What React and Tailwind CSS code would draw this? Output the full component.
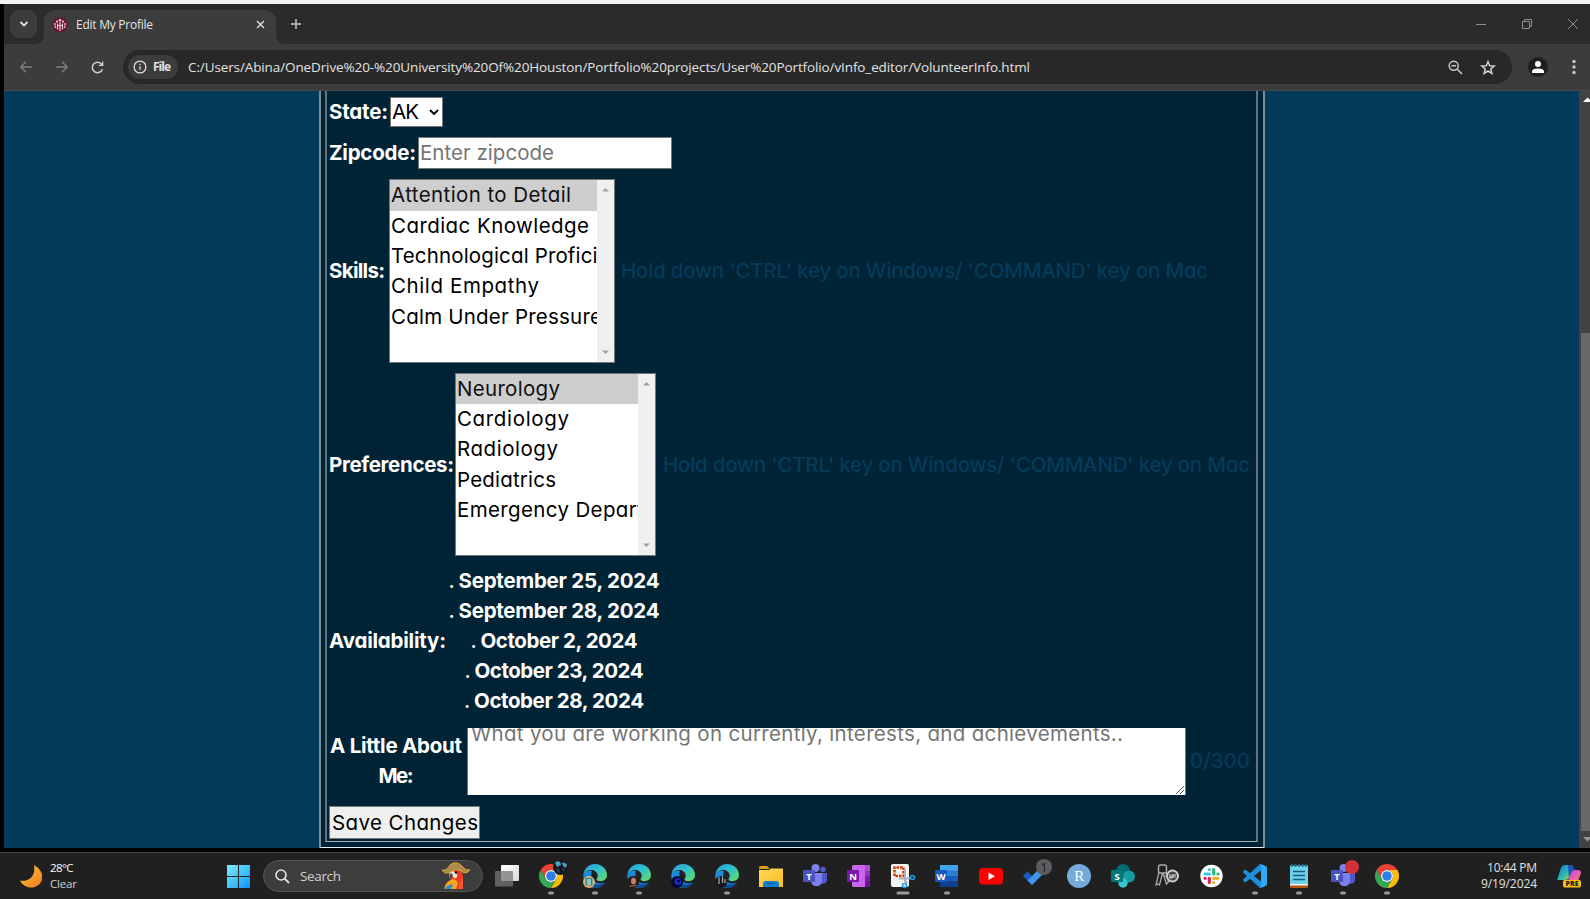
import React, { useLayoutEffect, useRef, useState } from 'react';

const FORM = "font-['Inter','Liberation_Sans',sans-serif] [font-feature-settings:'cv11'] text-[20.5px] leading-[30px]";
const UI = "font-['Open_Sans','Noto_Sans',sans-serif]";

/* Single line of text whose tracking is adjusted to fill a given width. */
function Fit({ w, className = '', children }) {
  const ref = useRef(null);
  const [tracking, setTracking] = useState(0);
  useLayoutEffect(() => {
    const natural = ref.current.getBoundingClientRect().width;
    setTracking((w - natural) / (String(children).length - 1));
  }, []);
  return (
    <span
      ref={ref}
      className={`inline-block shrink-0 whitespace-pre ${className}`}
      style={{ letterSpacing: `${tracking}px`, marginRight: `${-tracking}px` }}
    >
      {children}
    </span>
  );
}

const Label = ({ w, children }) => (
  <Fit w={w} className="font-bold text-white">{children}</Fit>
);

function ListBox({ width, first, options }) {
  return (
    <div className={`${width} flex shrink-0 border border-[#767676] bg-white`}>
      <div className="flex min-w-0 flex-1 flex-col overflow-hidden text-black">
        {options.map(([text, w], i) => (
          <div key={text} className={i === 0 ? `${first} shrink-0 overflow-hidden bg-[#cecece] pl-px text-[#101010]` : 'h-[30.2px] shrink-0 pl-px'}>
            <Fit w={w}>{text}</Fit>
          </div>
        ))}
      </div>
      <div className="flex w-[17px] shrink-0 flex-col items-center justify-between bg-[#f0f0f0] py-2">
        <svg width="7" height="4"><path d="M0 3.5L3.5 0L7 3.5Z" fill="#a3a3a3" /></svg>
        <svg width="7" height="4"><path d="M0 .5L3.5 4L7 .5Z" fill="#a3a3a3" /></svg>
      </div>
    </div>
  );
}

const skills = [['Attention to Detail', 180], ['Cardiac Knowledge', 198], ['Technological Proficiency', 254], ['Child Empathy', 148], ['Calm Under Pressure', 211]];
const prefs = [['Neurology', 103], ['Cardiology', 112], ['Radiology', 101], ['Pediatrics', 99], ['Emergency Department', 237]];
const dates = [['September 25, 2024', 201], ['September 28, 2024', 201], ['October 2, 2024', 157], ['October 23, 2024', 169], ['October 28, 2024', 170]];
const HINT = "Hold down 'CTRL' key on Windows/ 'COMMAND' key on Mac";

function Chrome() {
  return (
    <g transform="scale(.5)">
      <path fill="#ea4335" d="M3.2 12A24 24 0 0 1 44.8 12H24A12 12 0 0 0 13.6 30Z" />
      <path fill="#fbbc04" d="M44.8 12A24 24 0 0 1 24 48L34.4 30A12 12 0 0 0 24 12Z" />
      <path fill="#34a853" d="M24 48A24 24 0 0 1 3.2 12L13.6 30A12 12 0 0 0 34.4 30Z" />
      <circle cx="24" cy="24" r="12" fill="#fff" />
      <circle cx="24" cy="24" r="9.6" fill="#2f7de9" />
    </g>
  );
}

function Edge({ children }) {
  return (
    <g>
      <path fill="url(#edgeBlue)" d="M.3 11C2 8 5 6 9 7C8 9 8 13 10 16C13 19.500 18 20 22 18.500C20 22 16.500 24 12 24C5 24 0 18.500.3 11Z" />
      <path fill="#114a8b" d="M9.500 10C7.500 13 8 18 12 20.500C15 22 19 20.500 22 18.500C20 22 16.500 24 12.500 24C7 23 4 17 9.500 10Z" />
      <path fill="url(#edgeGreen)" d="M.3 11C1.200 4.500 6 0 12 0C19 0 24 5 24 11C24 15 21 17.200 17.500 17.200C15 17.200 13.500 16.300 13.500 15.200C13.500 14.300 15 13.500 14.700 11.300C14.300 8 11.500 6 8 6C4.500 6 1.800 8 .3 11Z" />
      {children}
    </g>
  );
}

const Badge = ({ letter, color }) => (
  <g>
    <rect x="0" y="6" width="12" height="12" rx="1" fill={color} />
    <text x="6" y="15.500" textAnchor="middle" fontSize="9.500" fontWeight="700" fill="#fff" fontFamily="Open Sans">{letter}</text>
  </g>
);

const Teams = ({ alert }) => (
  <g>
    <circle cx="12.500" cy="4" r="4" fill="#7b83eb" />
    <circle cx="20" cy="5.500" r="2.700" fill="#5059c9" />
    <path d="M17 9H24V16C24 19 21 20.500 18 19.500Z" fill="#5059c9" />
    <path d="M8 9H19V16C19 20 17 22 13.500 22C10 22 8 20 8 16Z" fill="#7b83eb" />
    <Badge letter="T" color="#4b53bc" />
    {alert && <circle cx="21" cy="3" r="7" fill="#d13438" />}
  </g>
);

const apps = [
  { art: <g><rect x="6" y="1" width="18" height="16" rx="1" fill="url(#paper)" /><rect x="0" y="7" width="18" height="15.500" rx="1" fill="#777" fillOpacity=".75" /></g> },
  { run: 1, art: <g><Chrome /><circle cx="21.500" cy="3.500" r="7.500" fill="#15191f" /><path d="M16-1C18-4 22-3 22 1L18 3ZM23-2L28 0L27 4L24 2Z" fill="#4f9fc4" /><path d="M17 5L20 4L21 9L18 8ZM23 5L26 4L25 9Z" fill="#28384d" /></g> },
  { run: 1, art: <Edge><circle cx="6" cy="18" r="6" fill="#e9ad77" /><path d="M2.500 14H9.500V21.500H2.500Z" fill="#238c86" /><path d="M4 16H8M4 18H8M4 20H8" stroke="#fff" /></Edge> },
  { run: 1, art: <Edge><circle cx="6" cy="18" r="6" fill="#2b1b17" /><ellipse cx="6.500" cy="17" rx="2.500" ry="3.200" fill="#b98263" /><path d="M2 23C4 20 9 20 10.500 22Z" fill="#7d5646" /></Edge> },
  { art: <Edge><circle cx="6" cy="18" r="6" fill="#080a34" /><circle cx="7" cy="17.500" r="3.200" fill="#1d2fd0" /><circle cx="7.500" cy="17" r="1.500" fill="#06071f" /></Edge> },
  { run: 1, art: <Edge><circle cx="6" cy="18" r="6" fill="#171a1c" /><path d="M4 13V20M7.500 12.500V19M10 15V19" stroke="#a9aeb0" strokeWidth="1.200" /></Edge> },
  { art: <g><path d="M0 3.500Q0 2 1.500 2H8L11 5H0Z" fill="#dc9a07" /><path d="M0 6H10L12 4.500H24V23H0Z" fill="url(#folder)" /><path d="M4 23V19.500Q4 17 6.500 17H17.500Q20 17 20 19.500V23Z" fill="#1082d4" /><path d="M8 19.500H16" stroke="#075797" strokeWidth="1.300" /></g> },
  { art: <Teams /> },
  { art: <g><rect x="5" y="1" width="18" height="22" rx="1.500" fill="#ca64ea" /><path d="M18 1H23V8H18Z" fill="#ae4bd5" /><path d="M18 7H23V12H18Z" fill="#9332bf" /><path d="M18 12H23V17H18Z" fill="#7719aa" /><path d="M18 17H23V23H18Z" fill="#6a1899" /><Badge letter="N" color="#7719aa" /></g> },
  { run: 2, art: <g><rect x="0" y="0" width="18" height="23" rx="2" fill="#f3f3f3" /><path d="M3.500 12V3.500H12.500V12Z" fill="none" stroke="#d83b01" strokeWidth="2.500" strokeDasharray="2.500 1" /><path d="M14 5V17L16.500 19M8 14.500H19" stroke="#aab1b8" strokeWidth="2" fill="none" /><circle cx="13.500" cy="21.500" r="2" fill="none" stroke="#1e9be8" strokeWidth="1.600" /><circle cx="21.500" cy="13.500" r="2" fill="none" stroke="#1e9be8" strokeWidth="1.600" /></g> },
  { run: 1, art: <g><path d="M5 1H23V7H5Z" fill="#41a5ee" /><path d="M5 6.500H23V12H5Z" fill="#2b7cd3" /><path d="M5 12H23V17.500H5Z" fill="#185abd" /><path d="M5 17.500H23V23H5Z" fill="#103f91" /><Badge letter="W" color="#185abd" /></g> },
  { art: <g><rect x="0" y="4" width="24" height="16.500" rx="4" fill="#f00" /><path d="M9.500 8.500L16 12.200L9.500 16Z" fill="#fff" /></g> },
  { art: <g><path d="M0 12L4.500 7.500L13.500 16.500L9 21Z" fill="#185abd" /><path d="M9 21L4.500 16.500L16 5L20.500 9.500Z" fill="#3f95ea" /><circle cx="21" cy="3" r="8" fill="#5c5c5c" /><text x="21" y="7.500" textAnchor="middle" fontSize="12" fill="#181818" fontFamily="Open Sans">1</text></g> },
  { art: <g><circle cx="12" cy="12" r="12" fill="#75aadb" /><text x="12.200" y="17" textAnchor="middle" fontSize="15" fill="#fff" fontFamily="Liberation Serif">R</text></g> },
  { art: <g><circle cx="12" cy="7" r="7" fill="#036c70" /><circle cx="18" cy="12.500" r="6" fill="#1a9ba1" /><circle cx="12" cy="19" r="4.700" fill="#37c6d0" /><Badge letter="S" color="#03787c" /></g> },
  { art: <g fill="none" stroke="#aaa"><rect x="3.500" y="1" width="8" height="8" rx="2" strokeWidth="1.500" /><path d="M4 8L1 21L3 20L4.500 21L7.500 9M8 9L11.500 20L13.500 18L11 9" strokeWidth="1.300" /><circle cx="17.500" cy="12" r="5.500" fill="#444" strokeWidth="2" stroke="#d0d0d0" /><path d="M15 10V14H17V11M18 10V14M20 10V13.500" stroke="#eee" /><path d="M9 12H12" /></g> },
  { art: <g><circle cx="12.500" cy="12" r="11.200" fill="#fff" /><g transform="translate(4 3.500)" strokeWidth="3.200" strokeLinecap="round"><path d="M6.300 2V2.100M2 6.500H6.300" stroke="#36c5f0" /><path d="M10.700 2V6.500M15 6.500H15.100" stroke="#2eb67d" /><path d="M10.700 10.800H15M10.700 15V15.100" stroke="#ecb22e" /><path d="M6.300 10.800V15M2 10.800H2.100" stroke="#e01e5a" /></g></g> },
  { run: 1, art: <g><path fill="#1f8fdc" d="M23.150 2.587L18.210.210a1.494 1.494 0 0 0-1.705.290l-9.460 8.630-4.120-3.128a.999.999 0 0 0-1.276.057L.327 7.261A1 1 0 0 0 .326 8.740L3.899 12 .326 15.260a1 1 0 0 0 .001 1.479L1.650 17.940a.999.999 0 0 0 1.276.057l4.120-3.128 9.460 8.630a1.492 1.492 0 0 0 1.704.290l4.942-2.377A1.500 1.500 0 0 0 24 20.060V3.939a1.500 1.500 0 0 0-.850-1.352zm-5.146 14.861L10.826 12l7.178-5.448v10.896z" /><path d="M18 .2L23.200 2.600Q24 3 24 4V20Q24 21 23.200 21.400L18 23.800Z" fill="#2ca9f5" /></g> },
  { run: 1, art: <g><rect x="3" y="1.500" width="18" height="20" fill="#6fd0ea" /><path d="M3 20.500H21V22.500Q21 24 19.500 24H4.500Q3 24 3 22.500Z" fill="#b5560d" /><path d="M3 20H21V21.500H3Z" fill="#f4f4f4" /><path d="M5 0V3M8.500 0V3M12 0V3M15.500 0V3M19 0V3" stroke="#1b6f90" strokeWidth="1.500" /><path d="M6 7.500H18M6 11.500H18M6 15.500H18" stroke="#135e7c" strokeWidth="1.500" /></g> },
  { run: 1, art: <Teams alert /> },
  { run: 1, art: <Chrome /> },
];

function TitleBar() {
  return (
    <div className={`flex h-10 items-end justify-between bg-[#2b2b2b] ${UI}`}>
      <div className="flex h-full items-end">
        <div className="mb-[6px] ml-[6px] flex h-7 w-[27px] items-center justify-center rounded-[9px] bg-[#3c3c3c]">
          <svg width="10" height="8"><path d="M1.500 2L5 5.500L8.500 2" fill="none" stroke="#e3e3e3" strokeWidth="1.800" /></svg>
        </div>
        <svg width="7" height="10" className="shrink-0"><path d="M7 0Q7 10-3 10H7Z" fill="#3c3c3c" /></svg>
        <div className="flex h-[34px] w-[232px] items-center rounded-t-[10px] bg-[#3c3c3c] pb-[5px] pl-[8px]">
          <svg width="16" height="16">
            <circle cx="8" cy="8" r="7.500" fill="#6d1230" />
            <g fill="#e5cdd5">
              <circle cx="8" cy="3.200" r="1.300" />
              <circle cx="5" cy="4.600" r="1.100" />
              <circle cx="11" cy="4.600" r="1.100" />
              <circle cx="2.800" cy="7" r="1" />
              <circle cx="13.200" cy="7" r="1" />
            </g>
            <path d="M8 5V14M5.500 6.500V12.500M10.500 6.500V12.500M3.200 8.500V11M12.800 8.500V11M5.500 8.500H10.500" stroke="#e5cdd5" strokeWidth="1.200" />
          </svg>
          <span className="ml-2 flex-1 text-[12px] leading-4 text-[#e3e3e3]"><Fit w={77}>Edit My Profile</Fit></span>
          <svg width="9" height="9" className="mr-[11px]"><path d="M1 1L8 8M8 1L1 8" stroke="#e3e3e3" strokeWidth="1.400" /></svg>
        </div>
        <svg width="10" height="10"><path d="M0 0Q0 10 10 10H0Z" fill="#3c3c3c" /></svg>
        <svg width="10" height="10" className="mb-[15px] ml-[5px]"><path d="M5 0V10M0 5H10" stroke="#c7c7c7" strokeWidth="1.500" /></svg>
      </div>
      <div className="mb-[15px] mr-3 flex items-center gap-9">
        <svg width="10" height="10"><path d="M0 5.500H10" stroke="#8f8f8f" /></svg>
        <svg width="10" height="10"><path d="M.5 2.500H7.500V9.500H.5ZM2.500 2.500V.5H9.500V7.500H7.500" fill="none" stroke="#8f8f8f" /></svg>
        <svg width="10" height="10"><path d="M0 0L10 10M10 0L0 10" stroke="#8f8f8f" /></svg>
      </div>
    </div>
  );
}

function AddressBar() {
  return (
    <div className={`flex h-[47px] items-start border-b border-[#4a4a4a] bg-[#3c3c3c] ${UI}`}>
      <div className="flex h-[46px] w-[119px] shrink-0 items-center pl-4">
        <svg width="12" height="12"><path d="M12 6H1M6 .7L.8 6L6 11.300" fill="none" stroke="#7d7d7d" strokeWidth="1.500" /></svg>
        <svg width="12" height="12" className="ml-6"><path d="M0 6H11M6 .7L11.200 6L6 11.300" fill="none" stroke="#7d7d7d" strokeWidth="1.500" /></svg>
        <svg width="13" height="13" className="ml-[23px]"><path d="M11.400 8.200A5.200 5.200 0 1 1 10.300 2.900L11.500 4.300" fill="none" stroke="#d0d0d0" strokeWidth="1.500" /><path d="M12.300.5V5H7.800V3.700H11V.5Z" fill="#d0d0d0" /></svg>
      </div>
      <div className="mt-[6px] flex h-[34px] w-[1389px] shrink-0 items-center rounded-full bg-[#282828] pl-[5px]">
        <div className="flex h-6 w-[50px] shrink-0 items-center rounded-full bg-[#3c3c3c] pl-[5px]">
          <svg width="14" height="14"><circle cx="7" cy="7" r="5.900" fill="none" stroke="#dcdcdc" strokeWidth="1.300" /><path d="M7 6.200V10M7 3.800V5.100" stroke="#dcdcdc" strokeWidth="1.300" /></svg>
          <Fit w={18} className="ml-[6px] text-[12px] font-bold leading-6 text-[#e3e3e3]">File</Fit>
        </div>
        <Fit w={842} className="ml-[10px] text-[13.5px] leading-6 text-[#e3e3e3]">C:/Users/Abina/OneDrive%20-%20University%20Of%20Houston/Portfolio%20projects/User%20Portfolio/vInfo_editor/VolunteerInfo.html</Fit>
        <div className="ml-auto mr-4 flex items-center gap-[17px]">
          <svg width="15" height="15"><circle cx="5.700" cy="5.700" r="4.500" fill="none" stroke="#c7c7c7" strokeWidth="1.500" /><path d="M9 9L14 14M3.500 5.700H8" stroke="#c7c7c7" strokeWidth="1.600" /></svg>
          <svg width="16" height="15"><path d="M8 1.700L9.700 5.800L14.200 6.100L10.800 9L11.900 13.400L8 11L4.100 13.400L5.200 9L1.800 6.100L6.300 5.800Z" fill="none" stroke="#d2d2d2" strokeWidth="1.500" /></svg>
        </div>
      </div>
      <div className="flex h-[46px] items-center">
        <svg width="20" height="20" className="ml-4"><circle cx="10" cy="10" r="10" fill="#1f1f1f" /><circle cx="10" cy="7" r="3" fill="#fff" /><path d="M4 16V14.500Q4 11.500 10 11.500T16 14.500V16Z" fill="#fff" /></svg>
        <svg width="4" height="16" className="ml-6"><g fill="#c7c7c7"><circle cx="2" cy="2.500" r="1.700" /><circle cx="2" cy="8" r="1.700" /><circle cx="2" cy="13.500" r="1.700" /></g></svg>
      </div>
    </div>
  );
}

function ProfileForm() {
  return (
    <div className="w-[946px] shrink-0 border-x-2 border-b border-x-[#7b8b95] border-b-[#e6eaec] bg-[#012336] pb-[5px] pl-1 pr-[5px]">
      <div className={`flex h-[751px] flex-col border-x-2 border-b border-x-[#65747e] border-b-[#a5b0b7] pl-[2px] ${FORM}`}>
        <div className="mt-[6px] flex h-[30px] shrink-0 items-center">
          <Label w={59}>State:</Label>
          <div className="ml-[2px] flex h-[30px] w-[53px] items-center border border-[#767676] bg-white pl-px text-black">
            <Fit w={27}>AK</Fit>
            <svg width="10" height="7" className="ml-[10px]"><path d="M1 1L5 5L9 1" fill="none" stroke="#000" strokeWidth="1.900" /></svg>
          </div>
        </div>
        <div className="mt-[10px] flex h-8 shrink-0 items-center">
          <Label w={87}>Zipcode:</Label>
          <div className="ml-[2px] h-8 w-[254px] border border-[#767676] bg-white text-[#757575]"><Fit w={135} className="pl-px">Enter zipcode</Fit></div>
        </div>
        <div className="mt-[10px] flex h-[184px] shrink-0 items-center">
          <Label w={56}>Skills:</Label>
          <div className="ml-1 flex"><ListBox width="h-[184px] w-[226px]" first="h-[31px]" options={skills} /></div>
          <Fit w={587} className="ml-[6px] font-medium text-[#043b5a]">{HINT}</Fit>
        </div>
        <div className="mt-[10px] flex h-[183px] shrink-0 items-center">
          <Label w={125}>Preferences:</Label>
          <div className="ml-px flex"><ListBox width="h-[183px] w-[201px]" first="h-[30.3px]" options={prefs} /></div>
          <Fit w={587} className="ml-[7px] font-medium text-[#043b5a]">{HINT}</Fit>
        </div>
        <div className="mt-[10px] flex h-[150px] shrink-0 items-center">
          <Label w={117}>Availability:</Label>
          <div className="ml-[2px] flex w-[212px] flex-col items-center text-white">
            {dates.map(([d, w]) => (
              <div key={d} className="flex h-[30px]"><span className="w-[10px] shrink-0 font-medium">.</span><Label w={w}>{d}</Label></div>
            ))}
          </div>
        </div>
        <div className="mt-3 flex h-[67px] shrink-0 items-center">
          <div className="flex w-[134px] flex-col items-center pb-px"><Label w={132}>A Little About</Label><Label w={35}>Me:</Label></div>
          <div className="ml-1 flex h-[67px] w-[719px] items-start justify-between overflow-hidden border-x border-[#767676] bg-white pl-[3px] text-[#757575]">
            <Fit w={652} className="-mt-[9px]">What you are working on currently, interests, and achievements..</Fit>
            <svg width="10" height="10" className="self-end"><path d="M1 9L9 1M5 9L9 5" stroke="#555" /></svg>
          </div>
          <Fit w={60} className="ml-1 pb-[2px] font-medium text-[#043b5a]">0/300</Fit>
        </div>
        <div className="mt-[11px] flex h-[33px] w-[151px] shrink-0 items-center border border-[#767676] bg-[#efefef] pl-[2px] text-black"><Fit w={146}>Save Changes</Fit></div>
      </div>
    </div>
  );
}

function Taskbar() {
  return (
    <div className={`flex h-[47px] items-center border-t border-[#444] bg-[#202020] text-[12px] leading-4 text-[#e0e0e0] ${UI}`}>
      <div className="flex w-[227px] shrink-0 items-center pl-5">
        <svg width="22" height="23"><path d="M14 0C25 6 25 18 15 22C8 24 2 20 0 15.500C9 17 16 11 14 0Z" fill="url(#moon)" /></svg>
        <div className="ml-2 flex flex-col text-white"><Fit w={26} className="text-[11.5px]">28°C</Fit><Fit w={27} className="text-[11.5px] text-[#d0d0d0]">Clear</Fit></div>
      </div>
      <svg width="23" height="23" className="shrink-0"><path d="M0 0H11V11H0ZM12 0H23V11H12ZM0 12H11V23H0ZM12 12H23V23H12Z" fill="url(#win)" /></svg>
      <div className="ml-[13px] flex h-8 w-[220px] shrink-0 items-center rounded-full border border-[#555] bg-[#3d3d3d] pl-[11px]">
        <svg width="15" height="15"><circle cx="6" cy="6" r="5" fill="none" stroke="#e5e5e5" strokeWidth="1.600" /><path d="M9.700 9.700L14 14" stroke="#e5e5e5" strokeWidth="1.800" /></svg>
        <Fit w={41} className="ml-[10px] text-[13.5px] text-[#d2d2d2]">Search</Fit>
        <svg width="28" height="28" viewBox="0 0 28 28" className="ml-[101px]">
          <path d="M10 9Q20 5 21 14V27H10Z" fill="#ef3823" />
          <path d="M2 27Q4 18 12 17Q18 19 14 27Z" fill="#f8a51f" />
          <path d="M2 27Q8 21 11 23L9 27Z" fill="#2c88d8" />
          <path d="M18 20L21 15V27H16Z" fill="#f8572c" />
          <path d="M8 10Q13 8 15 12Q16 17 12 16Q11 12 9 18Q6 14 8 10Z" fill="#eee4c9" />
          <path d="M9 11Q6 14 9 18L11 13Z" fill="#55493d" />
          <circle cx="14" cy="10.500" r="1.200" fill="#111" />
          <path d="M0 8Q5 9 8 3Q14-2 20 4Q23 9 28 8Q24 13 19 9Q14 6 8 10Q3 13 0 8Z" fill="#ac8a4d" stroke="#d7ab2f" />
        </svg>
      </div>
      <div className="ml-[2px] flex shrink-0">
        {apps.map((a, i) => (
          <svg key={i} width="44" height="46" viewBox="0 0 44 46">
            <g transform="translate(10 11)">{a.art}</g>
            {a.run && <rect x={a.run === 2 ? 15.5 : 19} y="38.500" width={a.run === 2 ? 13 : 6} height="3" rx="1.500" fill="#9b9b9b" />}
          </svg>
        ))}
      </div>
      <div className="ml-auto mr-5 flex flex-col items-end"><Fit w={50}>10:44 PM</Fit><Fit w={56}>9/19/2024</Fit></div>
      <svg width="24" height="24" viewBox="0 0 24 24" className="mr-[9px] shrink-0">
        <path d="M0 16L4 4Q5 1 8 1H13Q16 1 16 4L12 14Q11 16 8 16Z" fill="url(#cop1)" />
        <path d="M24 9L21 17H11L14 8Q15 6 18 6H21Q24 6 24 9Z" fill="url(#cop2)" />
        <path d="M11 1H14Q16 1 17 4L18 6Q15 6 14 9L12 14Z" fill="#2153b8" />
        <rect x="6" y="16" width="18" height="7.500" rx="2" fill="#fbc116" />
        <text x="15" y="22.300" textAnchor="middle" fontSize="7" fontWeight="800" fill="#1b1b1b" fontFamily="Open Sans">PRE</text>
      </svg>
    </div>
  );
}

function Gradient({ id, stops }) {
  return (
    <linearGradient id={id} x1="0" y1="0" x2="1" y2="1">
      {stops.map((c, i) => <stop key={c} offset={i / (stops.length - 1)} stopColor={c} />)}
    </linearGradient>
  );
}

export default function App() {
  return (
    <div className="flex h-[899px] w-[1590px] flex-col overflow-hidden bg-black">
      <svg width="0" height="0" className="absolute">
        <defs>
          <Gradient id="edgeBlue" stops={['#1996e0', '#1480d8', '#125bb0']} />
          <Gradient id="edgeGreen" stops={['#269de2', '#32c3cc', '#68dc59']} />
          <Gradient id="paper" stops={['#ffffff', '#d9d9d9']} />
          <Gradient id="folder" stops={['#ffd95d', '#fdbb20']} />
          <Gradient id="moon" stops={['#fcc83b', '#f2791d']} />
          <Gradient id="win" stops={['#7deaff', '#45c4fb', '#0a93f5']} />
          <Gradient id="cop1" stops={['#2180e8', '#23b1b4', '#c3dc31']} />
          <Gradient id="cop2" stops={['#8b5cf0', '#e758b4', '#f88666']} />
        </defs>
      </svg>
      <div className="h-1 shrink-0 bg-[#f2f2f2]" />
      <div className="flex h-[844px] shrink-0 flex-col pl-1">
        <TitleBar />
        <AddressBar />
        <div className="flex h-[757px] bg-[#043b5a]">
          <div className="flex flex-1 pl-[315px]"><ProfileForm /></div>
          <div className="flex w-[11px] flex-col overflow-hidden bg-[#424242] pl-[2px]">
            <svg width="9" height="16" className="shrink-0"><path d="M2 11L6.500 6.500L11 11Z" fill="#fff" /></svg>
            <div className="mt-[226px] h-[498px] shrink-0 bg-[#686868]" />
            <svg width="9" height="16" className="shrink-0"><path d="M2 6L6.500 10.500L11 6Z" fill="#969696" /></svg>
          </div>
        </div>
      </div>
      <div className="mt-1"><Taskbar /></div>
    </div>
  );
}
